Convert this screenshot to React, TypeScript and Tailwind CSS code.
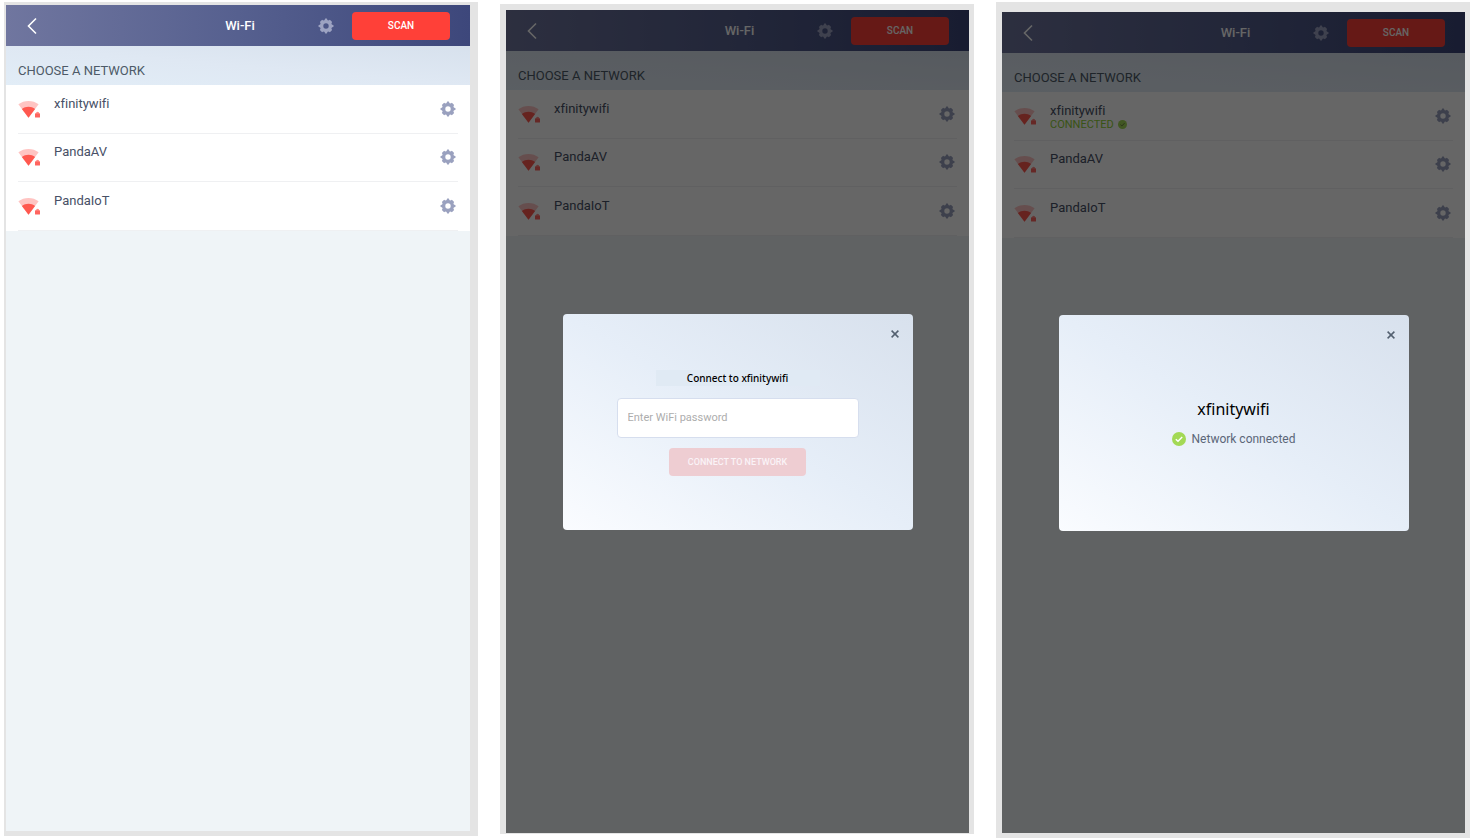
import type { ReactNode } from "react";

const networks = ["xfinitywifi", "PandaAV", "PandaIoT"];

const GearIcon = ({ className }: { className: string }) => (
  <svg viewBox="0 0 16 16" className={`size-4 ${className}`} aria-hidden="true">
    <circle cx="8" cy="8" r="4.3" fill="none" stroke="currentColor" strokeWidth="3.2" />
    <g fill="currentColor">
      {[0, 90, 180, 270].map((angle) => (
        <path key={angle} d="M6 3.2 7.2 .5h1.6l1.2 2.7z" transform={`rotate(${angle} 8 8)`} />
      ))}
      {[45, 135, 225, 315].map((angle) => (
        <path key={angle} d="M5.7 3.2 6.4 .9h3.200l.7 2.300z" transform={`rotate(${angle} 8 8)`} />
      ))}
    </g>
  </svg>
);

const WifiIcon = () => (
  <svg viewBox="0 0 22 18" className="h-[18px] w-[22px]" aria-hidden="true">
    <path d="M.4 4.300C6-.2 15-.2 20.600 4.300L10.500 17.800z" fill="#ffc4c2" />
    <path d="M3.900 9c3.800-3 9.400-3 13.200 0L10.500 17.800z" fill="#ff584f" />
    <path d="M16.300 18v-5.200l2-2H22V18z" fill="#fff" />
    <path d="M18 13.600a1.600 1.900 0 0 1 3.200 0z" fill="#ff8a85" />
    <rect x="17" y="13.300" width="5" height="4.200" rx=".6" fill="#ff6560" />
  </svg>
);

const CheckIcon = ({ className, stroke }: { className: string; stroke: string }) => (
  <svg viewBox="0 0 14 14" className={className} aria-hidden="true">
    <circle cx="7" cy="7" r="7" fill="#a3d955" />
    <path d="m3.800 7.200 2.200 2.100 4.200-4.400" fill="none" stroke={stroke} strokeWidth="1.400" />
  </svg>
);

const Header = () => (
  <header className="grid h-[41px] grid-cols-[1fr_auto_1fr] items-center bg-linear-to-r from-[#70769f] via-[#56608f] to-[#3d477b] pr-5 pl-6 text-white">
    <button type="button" aria-label="Back" className="w-4">
      <svg viewBox="0 0 16 18" className="h-[18px] w-4 overflow-visible" aria-hidden="true">
        <path d="M6 1.500-1.500 9 6 16.500" fill="none" stroke="currentColor" strokeWidth="1.600" />
      </svg>
    </button>
    <h1 className="text-[13px] leading-4 font-medium">Wi-Fi</h1>
    <div className="flex items-center justify-end gap-[18px]">
      <button type="button" aria-label="Wi-Fi settings">
        <GearIcon className="text-[#9da3c2]" />
      </button>
      <button type="button" className="h-7 w-[98px] rounded bg-[#ff4038] text-[10px] leading-4 font-medium">
        SCAN
      </button>
    </div>
  </header>
);

const NetworkList = ({ connected }: { connected?: string }) => (
  <section>
    <div className="flex h-[39px] items-end bg-linear-to-tr from-[#e2edf7] via-[#dfe8f3] to-[#d7e1ed] px-3 pb-1.5">
      <h2 className="text-[13px] leading-4 text-[#4d5a68]">CHOOSE A NETWORK</h2>
    </div>
    <ul className="grid h-[146px] grid-rows-3 bg-white px-3">
      {networks.map((name) => (
        <li key={name} className="flex items-center border-b border-[#eff0f2] pr-0.5">
          <WifiIcon />
          <div className="ml-3.5 h-[26px] flex-1">
            <p className="text-[13px] leading-4 text-[#475066] [font-variant-ligatures:none]">{name}</p>
            {name === connected && (
              <p className="flex items-center gap-1 text-[11px] leading-3 text-[#8fd136]">
                CONNECTED
                <CheckIcon className="size-[9px]" stroke="#66743f" />
              </p>
            )}
          </div>
          <button type="button" aria-label={`${name} settings`}>
            <GearIcon className="text-[#9aa1bf]" />
          </button>
        </li>
      ))}
    </ul>
  </section>
);

const Screen = ({ frame, connected, children }: { frame: string; connected?: string; children?: ReactNode }) => (
  <div className={`flex bg-[#e4e4e4] ${frame}`}>
    <div className="relative flex-1 bg-[#eff4f7]">
      <Header />
      <NetworkList connected={connected} />
      {children && (
        <div className="absolute inset-0 flex items-center justify-center bg-black/60">{children}</div>
      )}
    </div>
  </div>
);

const Dialog = ({ label, children }: { label: string; children: ReactNode }) => (
  <div
    role="dialog"
    aria-label={label}
    className="relative flex h-[216px] w-[350px] flex-col items-center justify-center rounded bg-linear-to-tr from-[#fafcff] via-[#e6eef8] to-[#d8e1ed]"
  >
    <button type="button" aria-label="Close" className="absolute top-3 right-2.5 flex size-4 items-center justify-center">
      <svg viewBox="0 0 8 8" className="size-2" aria-hidden="true">
        <path d="m.6.6 6.800 6.800M7.400.6.6 7.400" stroke="#536070" strokeWidth="1.500" />
      </svg>
    </button>
    {children}
  </div>
);

export default function App() {
  return (
    <main className="grid min-h-screen grid-cols-3 gap-[22px] bg-white pr-3 pl-1 font-['Roboto',sans-serif]">
      <Screen frame="mt-0.5 mb-1 pt-[3px] pr-2 pb-[5px] pl-0.5" />

      <Screen frame="mt-1 mb-1.5 pt-1.5 pr-[5px] pb-px pl-1.5">
        <Dialog label="Connect to network">
          <form className="flex flex-col items-center pt-0.5">
            <label
              htmlFor="wifi-password"
              className="w-[164px] bg-[#e0eaf4] text-center font-['Noto_Sans',sans-serif] text-[10px] leading-4 font-medium text-black"
            >
              Connect to xfinitywifi
            </label>
            <input
              id="wifi-password"
              type="password"
              placeholder="Enter WiFi password"
              className="mt-3 h-10 w-[242px] rounded border border-[#d6deee] bg-white px-2.5 text-[11px] leading-4 placeholder:text-[#adadad]"
            />
            <button
              type="button"
              disabled
              className="mt-2.5 h-7 w-[137px] rounded bg-[#eecdd2] text-[9px] leading-4 font-medium text-[#faf3f7]"
            >
              CONNECT TO NETWORK
            </button>
          </form>
        </Dialog>
      </Screen>

      <Screen frame="my-0.5 pt-2.5 pr-[5px] pb-[5px] pl-1.5" connected="xfinitywifi">
        <Dialog label="Network connected">
          <h2 className="font-['Noto_Sans',sans-serif] text-[16px] leading-6 text-black [font-variant-ligatures:none]">
            xfinitywifi
          </h2>
          <p className="mt-2 flex items-center gap-1.5 text-[12px] leading-5 text-[#5b6678]">
            <CheckIcon className="size-3.5" stroke="#fff" />
            Network connected
          </p>
        </Dialog>
      </Screen>
    </main>
  );
}
